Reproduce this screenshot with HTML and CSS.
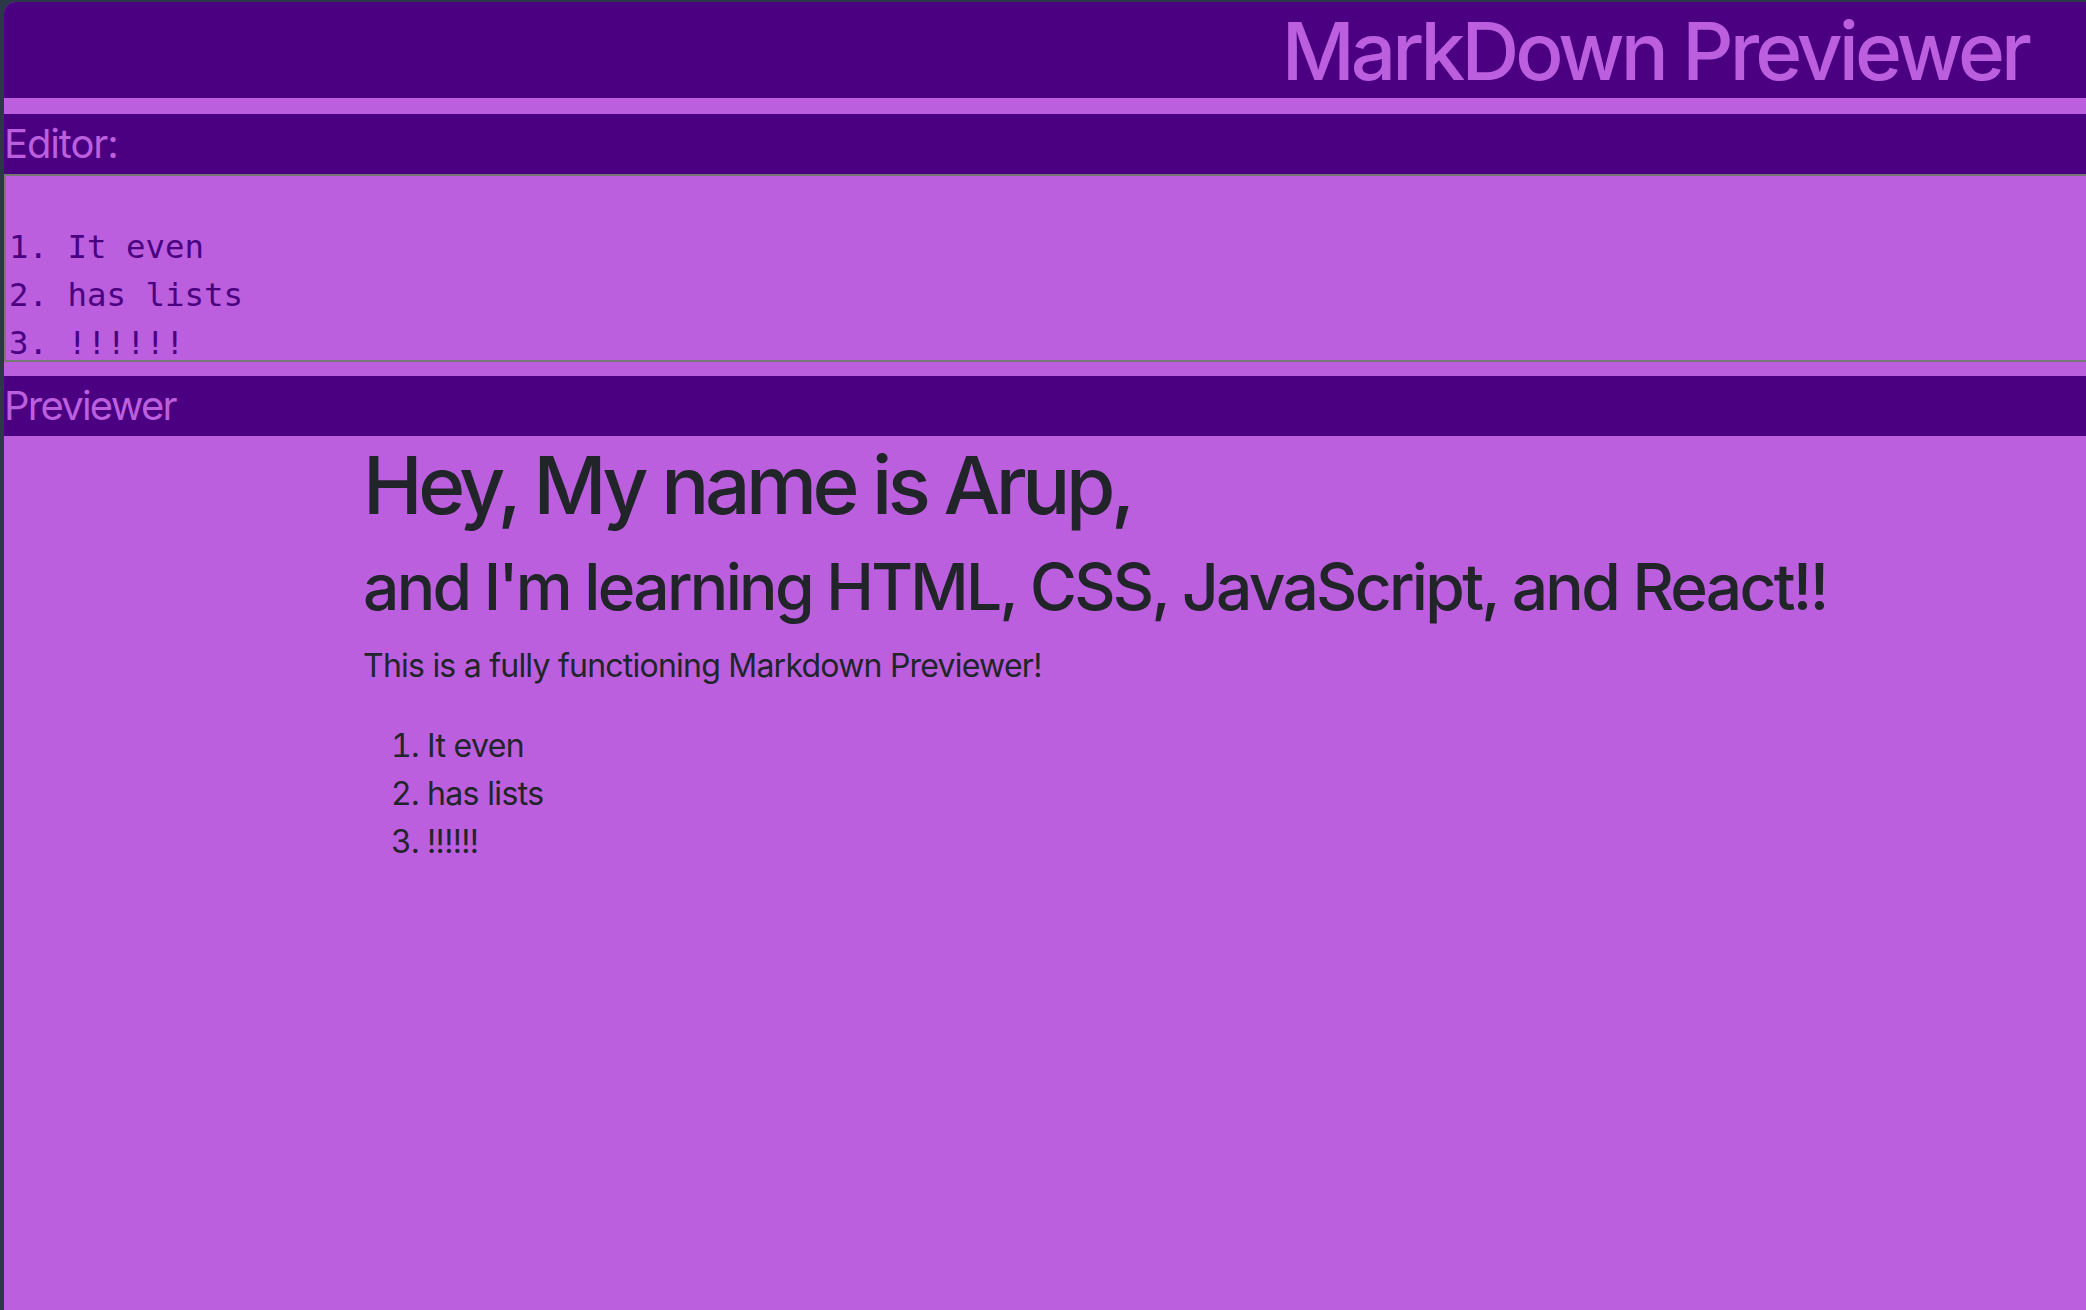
FILE: index.html
```html
<!DOCTYPE html>
<html lang="en">
<head>
<meta charset="utf-8">
<title>MarkDown Previewer</title>
<link rel="stylesheet" href="styles.css">
</head>
<body>
<div class="window">
  <header class="app-header">
    <h1 class="app-title">MarkDown Previewer</h1>
  </header>
  <section class="pane editor-pane">
    <div class="pane-bar bar-editor">Editor:</div>
    <textarea class="editor" spellcheck="false">1. It even
2. has lists
3. !!!!!!</textarea>
  </section>
  <section class="pane preview-pane">
    <div class="pane-bar bar-preview">Previewer</div>
    <div class="preview">
      <h1 class="md-h1">Hey, My name is Arup,</h1>
      <h2 class="md-h2">and I'm learning HTML, CSS, JavaScript, and React!!</h2>
      <p class="md-p">This is a fully functioning Markdown Previewer!</p>
      <ol class="md-ol">
        <li>It even</li>
        <li>has lists</li>
        <li>!!!!!!</li>
      </ol>
    </div>
  </section>
</div>
</body>
</html>
```

FILE: styles.css
```css
html, body {
  margin: 0;
  padding: 0;
  height: 100%;
}

body {
  background: #2b3848;
  font-family: Inter, "Noto Sans", "Liberation Sans", sans-serif;
  color: #212529;
  overflow: hidden;
}

.window {
  margin: 2px 0 0 4px;
  height: 1308px;
  background: #bb5fde;
  border-top-left-radius: 12px;
  overflow: hidden;
}

.app-header {
  background: #4b0082;
  height: 96px;
  margin-bottom: 16px;
  box-sizing: border-box;
  padding-top: 1px;
}

.app-title {
  margin: 0;
  font-size: 80px;
  font-weight: 500;
  line-height: 95px;
  letter-spacing: -0.049em;
  text-align: right;
  padding-right: 58px;
  color: #bb5fde;
}

.pane-bar {
  background: #4b0082;
  color: #bb5fde;
  font-size: 40px;
  font-weight: 400;
  line-height: 48px;
  padding: 6px 0;
}

.bar-editor {
  letter-spacing: -0.028em;
}

.bar-preview {
  letter-spacing: -0.044em;
}

.editor {
  display: block;
  box-sizing: border-box;
  width: 100%;
  height: 188px;
  margin: 0 0 14px 0;
  padding: 47px 2px 2px 3px;
  border: 2px solid #777777;
  border-right-width: 0;
  background: #bb5fde;
  color: #4b0082;
  font-family: "DejaVu Sans Mono", "Liberation Mono", monospace;
  font-size: 32.4px;
  line-height: 48px;
  resize: none;
  overflow: hidden;
  outline: none;
}

.preview {
  padding: 1px 0 0 359px;
}

.md-h1 {
  margin: 0 0 16px 0;
  font-size: 80px;
  font-weight: 500;
  line-height: 96px;
  letter-spacing: -0.055em;
}

.md-h2 {
  margin: 0 0 16px 0;
  font-size: 64px;
  font-weight: 500;
  line-height: 76.8px;
  letter-spacing: -0.042em;
}

.md-p {
  margin: 0 0 32px 0;
  font-size: 32px;
  line-height: 48px;
  letter-spacing: -0.024em;
}

.md-ol {
  margin: 0;
  padding-left: 64px;
  font-size: 32px;
  line-height: 48px;
  letter-spacing: -0.02em;
}
```
